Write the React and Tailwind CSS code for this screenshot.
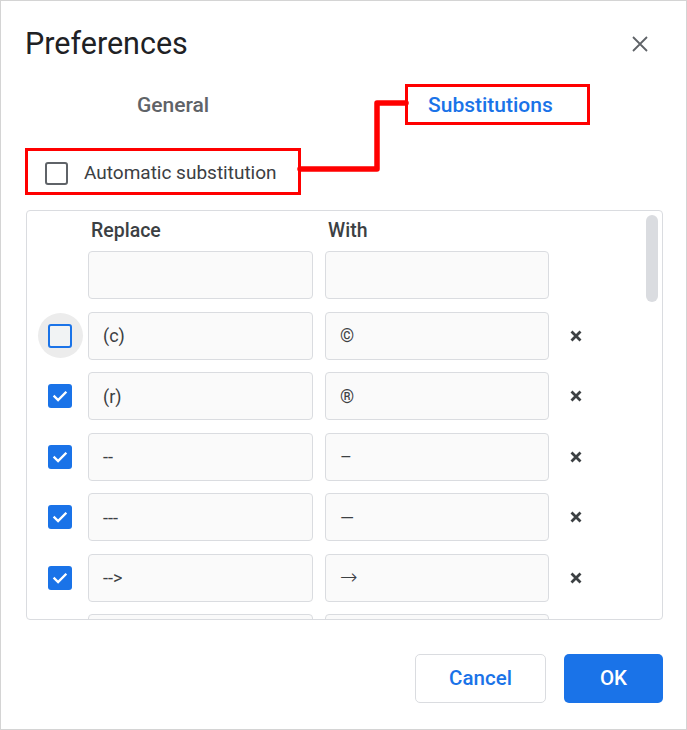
import React from "react";

const rows = [
  { on: false, focus: true, from: "(c)", to: "©" },
  { on: true, from: "(r)", to: "®" },
  { on: true, from: "--", to: "–" },
  { on: true, from: "---", to: "—" },
  { on: true, from: "-->", to: "→", arrow: true },
  { on: true, from: "", to: "" },
];

const CheckMark = () => (
  <svg width="16" height="16" viewBox="0 0 16 16" fill="none">
    <path d="M2.5 8.5l3.6 3.6L13.5 4.6" stroke="white" strokeWidth="2.4" strokeLinecap="square" />
  </svg>
);

const RowCheck = ({ on, focus }) => {
  if (on) {
    return (
      <div className="w-[24px] h-[24px] rounded-[3px] bg-[#1a73e8] flex items-center justify-center">
        <CheckMark />
      </div>
    );
  }
  return (
    <div className="relative w-[24px] h-[24px] flex items-center justify-center">
      {focus && <div className="absolute w-[45px] h-[45px] rounded-full bg-[#ececec]" />}
      <div className="relative w-[24px] h-[24px] rounded-[3px] border-2 border-[#1a73e8] bg-[#f1f3f4]" />
    </div>
  );
};

const RemoveIcon = () => (
  <svg width="12" height="12" viewBox="0 0 12 12" fill="none">
    <path d="M1.5 1.5l9 9M10.5 1.5l-9 9" stroke="#3c4043" strokeWidth="2.8" />
  </svg>
);

const Field = ({ value, arrow }) => (
  <div className="w-full h-[48px] rounded-[4px] border border-[#dadce0] bg-[#fafafa] flex items-center pl-[14px] text-[18px] text-[#3c4043]">
    {arrow ? (
      <span className="text-[21px]" style={{ fontFamily: "'DejaVu Sans', sans-serif", fontWeight: 200 }}>
        {value}
      </span>
    ) : (
      value
    )}
  </div>
);

const Row = ({ row, empty }) => (
  <div className="flex items-center h-[48px]">
    <div className="w-[61px] pl-[21px] flex items-center">
      {!empty && <RowCheck on={row.on} focus={row.focus} />}
    </div>
    <div className="w-[225px]">
      <Field value={empty ? "" : row.from} />
    </div>
    <div className="w-[224px] ml-[12px]">
      <Field value={empty ? "" : row.to} arrow={!empty && row.arrow} />
    </div>
    <div className="ml-[21px] flex items-center">{!empty && row.from !== "" && <RemoveIcon />}</div>
  </div>
);

export default function App() {
  return (
    <div
      className="relative w-[687px] h-[730px] border border-[#d4d4d4] bg-white flex flex-col overflow-hidden"
      style={{ fontFamily: "Roboto, 'Noto Sans', Arial, sans-serif" }}
    >
      <div className="flex items-center justify-between h-[38px] mt-[24px] pl-[24px] pr-[38px]">
        <h1 className="text-[30.5px] text-[#202124] leading-none">Preferences</h1>
        <svg width="16" height="16" viewBox="0 0 16 16" fill="none">
          <path d="M1 1l14 14M15 1L1 15" stroke="#5f6368" strokeWidth="1.8" />
        </svg>
      </div>

      <div className="flex items-center h-[41px] mt-[21px]">
        <div className="w-[344px] flex justify-center pt-[2px] text-[21px] font-medium text-[#5f6368]">General</div>
        <div className="ml-[60px] w-[185px] h-[41px] border-[3px] border-[#ff0000] flex items-center pt-[2px] pl-[20px] text-[21px] font-medium text-[#1a73e8]">
          Substitutions
        </div>
      </div>

      <div className="ml-[24px] mt-[23px] w-[276px] h-[47px] border-[3px] border-[#ff0000] flex items-center pt-[4px] pl-[17px] gap-[16px]">
        <div className="w-[23px] h-[23px] rounded-[3px] border-2 border-[#5f6368]" />
        <span className="text-[19px] text-[#3c4043]">Automatic substitution</span>
      </div>

      <div className="relative ml-[25px] mt-[15px] w-[637px] h-[410px] border border-[#dadce0] rounded-[4px] overflow-hidden">
        <div className="flex items-center h-[40px] text-[19.5px] font-medium text-[#3c4043]">
          <div className="w-[61px]" />
          <div className="w-[225px] pl-[3px]">Replace</div>
          <div className="ml-[12px] pl-[3px]">With</div>
        </div>
        <div className="flex flex-col gap-[12.5px]">
          <Row empty />
          {rows.map((r, i) => (
            <Row key={i} row={r} />
          ))}
        </div>
        <div className="absolute right-[4px] top-[4px] w-[12px] h-[87px] rounded-full bg-[#dadce0]" />
      </div>

      <div className="flex justify-end gap-[18px] mt-[34px] pr-[23px]">
        <button className="w-[131px] h-[49px] rounded-[5px] border border-[#dadce0] text-[20.5px] font-medium text-[#1a73e8] bg-white">
          Cancel
        </button>
        <button className="w-[99px] h-[49px] rounded-[5px] bg-[#1a73e8] text-[20.5px] font-medium text-white">
          OK
        </button>
      </div>

      <svg className="absolute -left-px -top-px pointer-events-none" width="687" height="730">
        <polyline
          points="300,169 377,169 377,103 406,103"
          fill="none"
          stroke="#ff0000"
          strokeWidth="5.5"
          strokeLinejoin="round"
          strokeLinecap="round"
        />
      </svg>
    </div>
  );
}
